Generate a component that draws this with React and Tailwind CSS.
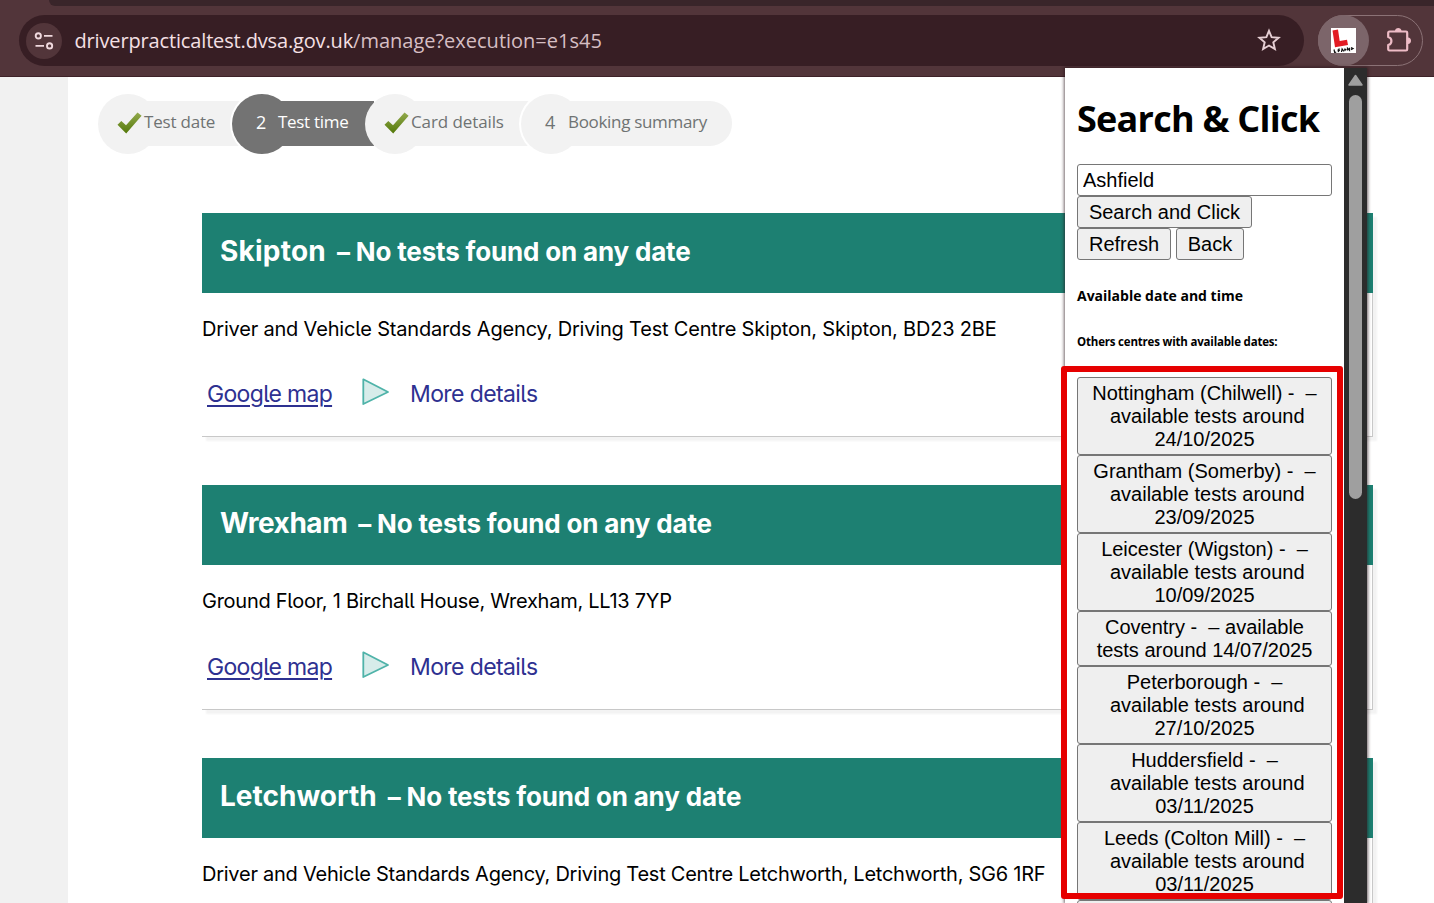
import React from 'react';

const centres = [
  { name: 'Skipton', address: 'Driver and Vehicle Standards Agency, Driving Test Centre Skipton, Skipton, BD23 2BE', tracking: 'tracking-[0.23px]', box: 'mb-[48px] h-[224px]', links: 'mt-[33px]', at: 'tracking-[-0.19px]' },
  { name: 'Wrexham', address: 'Ground Floor, 1 Birchall House, Wrexham, LL13 7YP', tracking: 'tracking-[-0.45px]', box: 'mb-[48px] h-[225px]', links: 'mt-[34px]', at: 'tracking-[-0.26px]' },
  { name: 'Letchworth', address: 'Driver and Vehicle Standards Agency, Driving Test Centre Letchworth, Letchworth, SG6 1RF', tracking: 'tracking-[0px]', box: 'h-[225px]', links: '', at: 'tracking-[-0.25px]' },
];

const results = [
  ['Nottingham (Chilwell) - \u00a0–', '\u00a0available tests around', '24/10/2025'],
  ['Grantham (Somerby) - \u00a0–', '\u00a0available tests around', '23/09/2025'],
  ['Leicester (Wigston) - \u00a0–', '\u00a0available tests around', '10/09/2025'],
  ['Coventry - \u00a0–\u00a0available', 'tests around 14/07/2025'],
  ['Peterborough - \u00a0–', '\u00a0available tests around', '27/10/2025'],
  ['Huddersfield - \u00a0–', '\u00a0available tests around', '03/11/2025'],
  ['Leeds (Colton Mill) - \u00a0–', '\u00a0available tests around', '03/11/2025'],
  [],
];

function Tick() {
  return (
    <svg width="26" height="24" viewBox="0 0 26 24" className="shrink-0">
      <defs>
        <linearGradient id="tick" x1="0" y1="0" x2="0" y2="1">
          <stop offset="0" stopColor="#93aa4d" />
          <stop offset="1" stopColor="#54790a" />
        </linearGradient>
      </defs>
      <path d="M0.500 13.700 L4.300 10 L9 14.300 L20.500 1.500 L24.600 4.800 L9.200 22.400 Z" fill="url(#tick)" />
    </svg>
  );
}

function Step({ width, circle, bar, children }) {
  return (
    <div className={`grid h-[60px] shrink-0 ${width}`}>
      <div className={`col-start-1 row-start-1 size-[60px] rounded-full ${circle}`} />
      <div className={`col-start-1 row-start-1 mt-[7px] ml-[30px] h-[45px] ${bar}`} />
      <div className="z-10 col-start-1 row-start-1 flex h-[56px] items-center text-[17px] whitespace-nowrap">{children}</div>
    </div>
  );
}

function Steps() {
  return (
    <nav className="ml-[30px] flex font-['Open_Sans',sans-serif] text-[#6f7373]">
      <Step width="w-[134px]" circle="bg-[#f2f2f2]" bar="-mr-[9px] bg-[#f2f2f2]">
        <span className="mt-[1px] ml-[19px] flex"><Tick /></span>
        <span className="ml-[1px] tracking-[-0.2px]">Test date</span>
      </Step>
      <Step width="w-[133px]" circle="bg-[#737373] shadow-[0_0_0_2px_#fff]" bar="-mr-[9px] bg-[#737373]">
        <span className="ml-[24px] w-[22px] text-[18px] text-white">2</span>
        <span className="font-medium tracking-[-0.3px] text-white">Test time</span>
      </Step>
      <Step width="w-[156px]" circle="bg-[#f2f2f2]" bar="-mr-[9px] bg-[#f2f2f2]">
        <span className="mt-[1px] ml-[19px] flex"><Tick /></span>
        <span className="ml-[1px] tracking-[-0.1px]">Card details</span>
      </Step>
      <Step width="w-[211px]" circle="bg-[#f2f2f2] shadow-[0_0_0_2px_#fff]" bar="rounded-r-[22px] bg-[#f2f2f2]">
        <span className="ml-[24px] w-[23px] text-[18px]">4</span>
        <span className="tracking-[-0.32px]">Booking summary</span>
      </Step>
    </nav>
  );
}

function CentreCard({ centre }) {
  return (
    <article className={`w-[1171px] shrink-0 border-r border-b border-[#c8c8c8] bg-white shadow-[4px_4px_2px_#f3f3f3] ${centre.box}`}>
      <h2 className="-mr-px flex h-[80px] items-baseline bg-[#1d8072] pt-[17px] pl-[18px] font-bold whitespace-pre text-white">
        <span className={`text-[28px] leading-[42px] ${centre.tracking}`}>{centre.name}</span>
        <span className="ml-[11px] text-[26px] leading-[42px] tracking-[-0.17px]">– No tests found on any date</span>
      </h2>
      <p className={`mt-[21px] text-[20px] leading-[30px] whitespace-nowrap text-black ${centre.at}`}>{centre.address}</p>
      {centre.links && (
        <div className={`flex h-[34px] items-center pl-[5px] text-[23px] text-[#2e3191] ${centre.links}`}>
          <a className="w-[155px] tracking-[-0.68px] underline decoration-[1.5px] underline-offset-[3px]">Google map</a>
          <svg width="28" height="28" viewBox="0 0 28 28" className="-mt-[4px]">
            <path d="M1.3 1.3 L26 14 L1.3 26 Z" fill="#d7ecea" stroke="#4fb3a9" strokeWidth="1.8" strokeLinejoin="round" />
          </svg>
          <a className="ml-[20px] tracking-[-0.6px]">More details</a>
        </div>
      )}
    </article>
  );
}

function Toolbar() {
  return (
    <header className="flex h-[77px] shrink-0 flex-col border-b border-[#3e2228] bg-[#52353a]">
      <div className="ml-[49px] h-[6px] rounded-bl-[14px] bg-[#39252a]" />
      <div className="mt-[9px] flex h-[51px] pl-[19px]">
        <div className="flex w-[1285px] items-center rounded-full bg-[#371e24] pl-[7px]">
          <span className="grid size-[36px] place-items-center rounded-full bg-[#52353a]">
            <svg width="20" height="20" viewBox="0 0 20 20" fill="none" stroke="#f0d9de" strokeWidth="1.9">
              <circle cx="4.3" cy="4.9" r="2.6" />
              <path d="M10 4.900h8.5M1.5 14.900h8.500" />
              <circle cx="15.6" cy="14.900" r="2.6" />
            </svg>
          </span>
          <p className="ml-[12.5px] text-[20px] whitespace-nowrap text-[#f5e0e4] font-['Open_Sans',sans-serif]">
            <span className="tracking-[-0.15px]">driverpracticaltest.dvsa.gov.uk</span>
            <span className="text-[#d6bec3]">/manage?execution=e1s45</span>
          </p>
          <svg width="24" height="24" viewBox="0 0 24 24" className="-mt-px mr-[23.5px] ml-auto" fill="none" stroke="#e6cfd4" strokeWidth="1.9">
            <path d="M12 2.8l2.6 6.4 7 .5-5.3 4.6 1.6 6.8-5.9-3.6-5.9 3.6 1.6-6.8-5.3-4.6 7-.5z" />
          </svg>
        </div>
        <div className="ml-[14px] flex w-[105px] items-center rounded-full border border-[#8b7276]">
          <span className="-ml-px grid size-[51px] shrink-0 place-items-center rounded-full bg-[#7c656a]">
            <svg width="25" height="25" viewBox="0 0 25 25">
              <rect width="25" height="25" fill="#fff" />
              <path d="M1.500 2.500l5.500-1 1.700 11.500 7.300-1.300 1 5.300-13 2.200z" fill="#e21b23" />
              <path d="M3 21.5l.7 3M3.2 24.5l2-.4M7 21.3l.5 2.8M7 21.3l2-.3M7.2 22.8l1.7-.3M10.5 24l.6-3 1.8 2.4M13.6 20.7l.5 2.5M13.6 21l1.8.8M16.5 22.6v-2.4l2 2v-2.5M20 21.6l2-1-2-1" fill="none" stroke="#111" strokeWidth="1.2" />
            </svg>
          </span>
          <svg width="26" height="26" viewBox="0 0 26 26" className="-mt-[2px] ml-[17px]" fill="none" stroke="#eebcc6" strokeWidth="2.2" strokeLinejoin="round">
            <path d="M3.500 4.500H20Q21.200 4.500 21.200 5.700V22.300Q21.200 23.500 20 23.500H3.500Q2.200 23.500 2.200 22V18C6.500 17 6.500 11 2.200 10V6Q2.200 4.500 3.500 4.500Z" />
            <path d="M9 4C9 0 15.500 0 15.500 4ZM22 10.500C26 10.500 26 17 22 17Z" fill="#eebcc6" stroke="none" />
          </svg>
        </div>
      </div>
    </header>
  );
}

const control = "rounded-[3px] border border-[#767676] bg-[#efefef] font-['Liberation_Sans',Arial,sans-serif] text-[20px] leading-[23px] text-black";

function Popup() {
  return (
    <aside className="absolute top-[68px] left-[1065px] flex h-[835px] w-[302px] bg-white font-['Open_Sans',sans-serif] text-black shadow-[0_0_3px_1px_rgba(40,20,25,0.65)]">
      <div className="flex w-[279px] flex-col overflow-hidden pl-[12px]">
        <h1 className="mt-[27px] text-[36px] leading-[48px] font-bold tracking-[-0.75px] whitespace-nowrap">Search &amp; Click</h1>
        <input defaultValue="Ashfield" className="mt-[21px] h-[32px] w-[255px] shrink-0 rounded-[3px] border border-[#767676] bg-white px-[5px] font-['Liberation_Sans',Arial,sans-serif] text-[20px]" />
        <div className="flex"><button className={`h-[32px] w-[175px] ${control}`}>Search and Click</button></div>
        <div className="flex gap-[5px]">
          <button className={`h-[32px] w-[94px] ${control}`}>Refresh</button>
          <button className={`h-[32px] w-[68px] ${control}`}>Back</button>
        </div>
        <h4 className="mt-[26px] text-[14px] leading-[20px] font-bold">Available date and time</h4>
        <h5 className="mt-[27px] text-[11.5px] leading-[18px] font-bold tracking-[-0.19px] whitespace-nowrap">Others centres with available dates:</h5>
        <div className="mt-[26px] flex w-[255px] flex-col">
          {results.map((lines, i) => (
            <button key={i} className={`flex shrink-0 flex-col items-center pt-[4px] ${lines.length === 2 ? 'h-[55px]' : 'h-[78px]'} ${control}`}>
              {lines.map((line) => (
                <span key={line} className="block whitespace-pre">{line}</span>
              ))}
            </button>
          ))}
        </div>
      </div>
      <div className="flex w-[23px] flex-col items-center bg-[#2c2c2c] pt-[6px]">
        <svg width="15" height="12" viewBox="0 0 15 12">
          <path d="M7.500 1.500L14 11H1Z" fill="#9f9f9f" stroke="#9f9f9f" strokeWidth="1.500" strokeLinejoin="round" />
        </svg>
        <div className="mt-[9px] h-[404px] w-[13px] rounded-full bg-[#9f9f9f]" />
      </div>
    </aside>
  );
}

export default function App() {
  return (
    <div className="relative flex h-[903px] w-[1434px] flex-col overflow-hidden bg-white">
      <Toolbar />
      <main className="flex min-h-0 flex-1">
        <div className="w-[68px] shrink-0 bg-[#f1f1f1]" />
        <div className="flex min-w-0 flex-1 flex-col pt-[17px]">
          <Steps />
          <section className="mt-[59px] ml-[134px] flex flex-col font-['Inter',sans-serif] [font-feature-settings:'cv05']">
            {centres.map((centre) => <CentreCard key={centre.name} centre={centre} />)}
          </section>
        </div>
      </main>
      <Popup />
      <div className="pointer-events-none absolute top-[366px] left-[1061px] h-[533px] w-[282px] rounded-[3px] border-[6px] border-[#e60000]" />
    </div>
  );
}
